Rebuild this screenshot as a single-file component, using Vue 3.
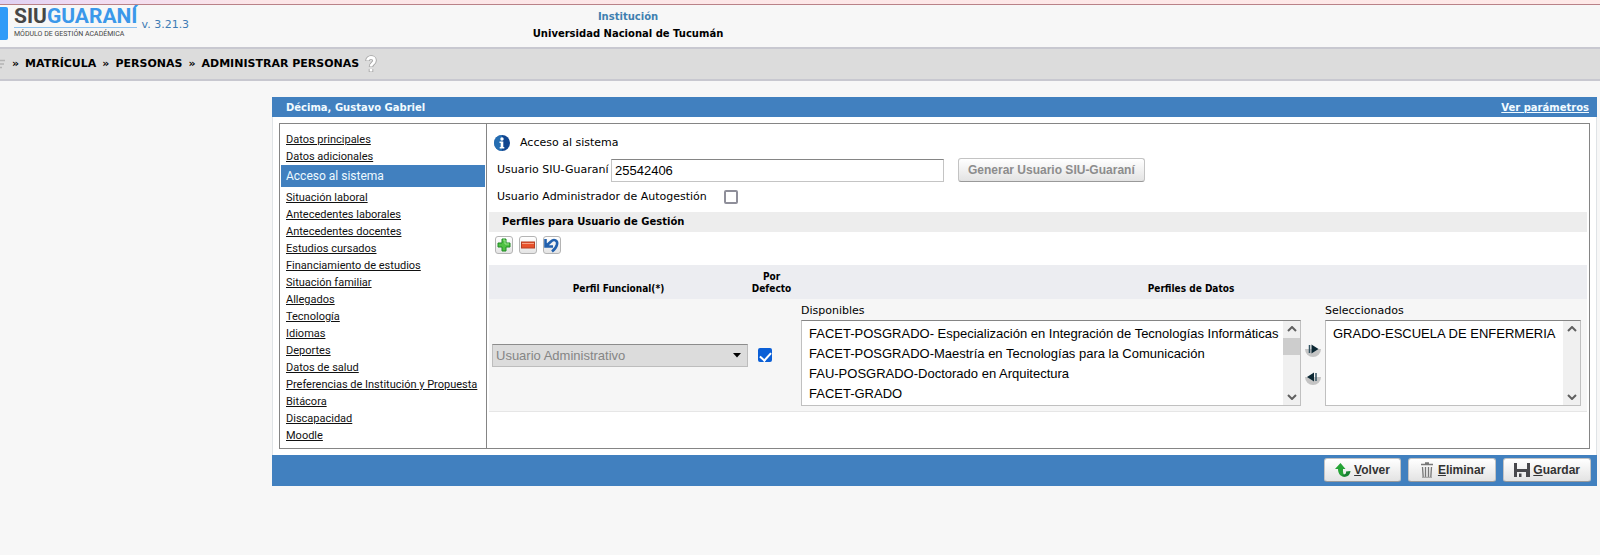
<script setup>
import { ref } from 'vue'

const crumbs = ['MATRÍCULA', 'PERSONAS', 'ADMINISTRAR PERSONAS']

const sections = [
  'Datos principales',
  'Datos adicionales',
  'Acceso al sistema',
  'Situación laboral',
  'Antecedentes laborales',
  'Antecedentes docentes',
  'Estudios cursados',
  'Financiamiento de estudios',
  'Situación familiar',
  'Allegados',
  'Tecnología',
  'Idiomas',
  'Deportes',
  'Datos de salud',
  'Preferencias de Institución y Propuesta',
  'Bitácora',
  'Discapacidad',
  'Moodle',
]
const active = 'Acceso al sistema'

const available = [
  'FACET-POSGRADO- Especialización en Integración de Tecnologías Informáticas',
  'FACET-POSGRADO-Maestría en Tecnologías para la Comunicación',
  'FAU-POSGRADO-Doctorado en Arquitectura',
  'FACET-GRADO',
]
const selected = ['GRADO-ESCUELA DE ENFERMERIA']

const username = ref('25542406')
const isAdmin = ref(false)
const isDefault = ref(true)
</script>

<template>
  <div class="page">
    <div class="strip"></div>
    <header class="top">
      <div class="brand">
        <span class="mark"></span>
        <div class="logo">
          <div class="name">SIU<span>GUARANÍ</span></div>
          <div class="module">MÓDULO DE GESTIÓN ACADÉMICA</div>
        </div>
        <span class="version">v. 3.21.3</span>
      </div>
      <div class="institution">
        <div class="inst-label">Institución</div>
        <div>Universidad Nacional de Tucumán</div>
      </div>
    </header>

    <nav class="crumbs">
      <svg width="6" height="12" viewBox="0 0 6 12"><path d="M0 2.5h5M0 6h4M0 9.500h2" stroke="#b4b4b4" stroke-width="1.500" /></svg>
      <template v-for="c in crumbs" :key="c">
        <span>»</span>
        <span>{{ c }}</span>
      </template>
      <svg width="12" height="18" viewBox="0 0 12 18">
        <path d="M2.500 6C2.500 1.500 9.500 1.500 9.500 5.500C9.500 8.500 6 8.500 6 12M6 14v3" fill="none" stroke="#a2a2a2" stroke-width="4.500" />
        <path d="M2.500 5.500C2.500 1.500 9.500 1.500 9.500 5.500C9.500 8.500 6 8.500 6 11.500M6 14v2.500" fill="none" stroke="#fff" stroke-width="2.800" />
      </svg>
    </nav>

    <main class="panel">
      <div class="bar">
        <span>Décima, Gustavo Gabriel</span>
        <a href="#">Ver parámetros</a>
      </div>

      <div class="frame">
        <div class="box">
          <ul class="menu">
            <li v-for="s in sections" :key="s" :class="{ active: s === active }">
              <a href="#">{{ s }}</a>
            </li>
          </ul>

          <section class="content">
            <div class="intro">
              <svg width="16" height="16" viewBox="0 0 16 16">
                <circle cx="8" cy="8" r="8" fill="#0f4590" />
                <path d="M8 0a8 8 0 0 0 0 16z" fill="#2e7fc0" opacity=".7" />
                <circle cx="8" cy="4" r="1.700" fill="#fff" />
                <path d="M5.500 6.500H9.300V12h1v1.500H5.700V12h1V8H5.500z" fill="#fff" />
              </svg>
              <span>Acceso al sistema</span>
            </div>

            <div class="row">
              <label class="user-label" for="user">Usuario SIU-Guaraní</label>
              <input id="user" v-model="username" class="text" type="text" />
              <button class="btn generate" type="button" disabled>Generar Usuario SIU-Guaraní</button>
            </div>

            <div class="row admin">
              <label for="admin">Usuario Administrador de Autogestión</label>
              <input id="admin" v-model="isAdmin" class="check" type="checkbox" />
            </div>

            <h2>Perfiles para Usuario de Gestión</h2>

            <div class="tools">
              <button type="button" aria-label="Agregar">
                <svg width="14" height="14" viewBox="0 0 14 14"><path d="M5 1h4v4h4v4H9v4H5V9H1V5h4z" fill="#4fc143" stroke="#218a25" /><path d="M6 2h2v4h4" fill="none" stroke="#9be58d" /></svg>
              </button>
              <button type="button" aria-label="Quitar">
                <svg width="14" height="14" viewBox="0 0 14 14"><rect x=".5" y="4" width="13" height="6" fill="#e8522c" stroke="#b53e22" /><path d="M1 5.500h12" stroke="#f7a184" /></svg>
              </button>
              <button type="button" aria-label="Deshacer">
                <svg width="16" height="16" viewBox="0 0 16 16"><path d="M1.500 2v7.500H9M2 9L7 4.500C10 1.500 14 3.500 13 7.500C12.500 10 10.500 12.500 8 14.500" fill="none" stroke="#2361ad" stroke-width="2.600" /></svg>
              </button>
            </div>

            <table>
              <thead>
                <tr>
                  <th class="c-profile">Perfil Funcional(*)</th>
                  <th class="c-default">Por<br />Defecto</th>
                  <th>Perfiles de Datos</th>
                </tr>
              </thead>
              <tbody>
                <tr>
                  <td>
                    <div class="combo">
                      <select disabled aria-label="Perfil Funcional">
                        <option>Usuario Administrativo</option>
                      </select>
                      <svg width="8" height="5" viewBox="0 0 8 5"><path d="M0 0h8L4 4.500z" fill="#000" /></svg>
                    </div>
                  </td>
                  <td class="def">
                    <input v-model="isDefault" class="check" type="checkbox" aria-label="Por Defecto" />
                  </td>
                  <td>
                    <div class="lists">
                      <div class="col wide">
                        <label for="avail">Disponibles</label>
                        <div class="list">
                          <select id="avail" multiple size="4">
                            <option v-for="p in available" :key="p">{{ p }}</option>
                          </select>
                          <div class="scroll">
                            <svg width="10" height="6" viewBox="0 0 10 6"><path d="M1 5l4-4 4 4" /></svg>
                            <i class="thumb"></i>
                            <svg class="down" width="10" height="6" viewBox="0 0 10 6"><path d="M1 1l4 4 4-4" /></svg>
                          </div>
                        </div>
                      </div>
                      <div class="arrows">
                        <button type="button" aria-label="Agregar seleccionados">
                          <svg width="16" height="16" viewBox="0 0 16 16"><path d="M0 8h16a8 8 0 0 1-16 0z" fill="#c4c4c4" /><path d="M4.500 4v8" stroke="#335260" stroke-width="1.500" /><path d="M6.500 3.500v9L13.500 8z" fill="#0b2733" /></svg>
                        </button>
                        <button type="button" aria-label="Quitar seleccionados">
                          <svg width="16" height="16" viewBox="0 0 16 16"><path d="M0 8h16a8 8 0 0 1-16 0z" fill="#c4c4c4" /><path d="M11 4v8" stroke="#335260" stroke-width="1.500" /><path d="M9 3.500v9L2 8z" fill="#0b2733" /></svg>
                        </button>
                      </div>
                      <div class="col narrow">
                        <label for="chosen">Seleccionados</label>
                        <div class="list">
                          <select id="chosen" multiple size="4">
                            <option v-for="p in selected" :key="p">{{ p }}</option>
                          </select>
                          <div class="scroll">
                            <svg width="10" height="6" viewBox="0 0 10 6"><path d="M1 5l4-4 4 4" /></svg>
                            <svg class="down" width="10" height="6" viewBox="0 0 10 6"><path d="M1 1l4 4 4-4" /></svg>
                          </div>
                        </div>
                      </div>
                    </div>
                  </td>
                </tr>
              </tbody>
            </table>
          </section>
        </div>
      </div>

      <footer>
        <button class="btn" type="button">
          <svg width="16" height="16" viewBox="0 0 16 16"><path d="M5.500 1L0 7h3c0 5 3 8 7.500 8C9 13.500 7.500 11 8 7h2.500z" fill="#25a336" /><path d="M7.500 14c4 2 7.500-.5 8-5l-4.500.5c.5 2-1 3.500-3.500 3z" fill="#178232" /></svg>
          <span><u>V</u>olver</span>
        </button>
        <button class="btn" type="button">
          <svg width="16" height="16" viewBox="0 0 16 16"><path d="M2 2.500h12M6 1h4" stroke="#777" stroke-width="1.500" /><path d="M3.500 5l.7 10M12.500 5l-.7 10M6.500 5v10M9.500 5v10" stroke="#777" stroke-width="1.300" /><path d="M3 15.300h10" stroke="#999" /></svg>
          <span><u>E</u>liminar</span>
        </button>
        <button class="btn" type="button">
          <svg width="16" height="16" viewBox="0 0 16 16"><path d="M0 1h3v6h10V1h3v14H0z" fill="#48484c" /><path d="M3 10h9v5H3z" fill="#eee" /><path d="M5 11.500h2.500V15H5z" fill="#48484c" /></svg>
          <span><u>G</u>uardar</span>
        </button>
      </footer>
    </main>
  </div>
</template>

<style>
body {
  background: #f7f7f7;
}
</style>

<style scoped>
.page {
  font: 11px/14px "DejaVu Sans", Verdana, sans-serif;
  color: #000;
}
.page * {
  box-sizing: border-box;
}
.strip {
  height: 5px;
  border-bottom: 1px solid #b98288;
  background: linear-gradient(90deg, #ddd0f3, #f0dcf3 5%, #fce6e8 16%, #fee9e8);
}
.top {
  display: grid;
  grid-template-columns: 200px 1fr 34%;
  height: 42px;
}
.brand {
  display: flex;
  align-items: flex-start;
}
.mark {
  flex: none;
  width: 8px;
  height: 33px;
  margin: 2px 6px 0 0;
  border-radius: 0 2px 2px 0;
  background: #2f9bf8;
}
.logo {
  white-space: nowrap;
}
.name {
  border-bottom: 1px solid #8fc3ef;
  font: bold 21px/22px Roboto, "Open Sans", sans-serif;
  color: #464646;
}
.name span {
  color: #3b98ea;
}
.module {
  font: 7px/12px Roboto, "Open Sans", sans-serif;
  color: #444;
}
.version {
  margin: 13px 0 0 4px;
  color: #3f7cb5;
  white-space: nowrap;
}
.institution {
  padding-top: 3px;
  text-align: center;
  font-size: 10px;
  font-weight: bold;
  line-height: 17px;
}
.inst-label {
  color: #3f80b0;
}
.crumbs {
  display: flex;
  align-items: center;
  gap: 6px;
  height: 34px;
  border: solid #c8c8d0;
  border-width: 2px 0;
  background: #dcdcdc;
  font-weight: bold;
}
.panel {
  margin: 16px 3px 0 17%;
}
.bar {
  display: flex;
  justify-content: space-between;
  padding: 4px 8px 2px 14px;
  background: #4180bf;
  color: #f2fbff;
  font-size: 10px;
  font-weight: bold;
}
.bar a {
  color: inherit;
}
.frame {
  padding: 6px;
  border: solid #dfe3e6;
  border-width: 0 1px;
  background: #fff;
}
.box {
  display: flex;
  border: 1px solid #858585;
}
.menu {
  flex: none;
  width: 207px;
  margin: 0;
  padding: 7px 1px 4px;
  border-right: 1px solid #858585;
  list-style: none;
  font: 11px/17px Roboto, Tahoma, sans-serif;
}
.menu li {
  padding-left: 5px;
  white-space: nowrap;
}
.menu a {
  color: #111;
}
.menu .active {
  margin-bottom: 2px;
  background: #4180bf;
  font-size: 12px;
  line-height: 22px;
}
.menu .active a {
  color: #eefaff;
  text-decoration: none;
}
.content {
  flex: 1;
  min-width: 0;
  padding: 11px 2px 0;
}
.intro {
  display: flex;
  align-items: center;
  gap: 10px;
  padding-left: 5px;
}
.row {
  display: flex;
  align-items: center;
  padding-left: 8px;
}
.intro + .row {
  margin-top: 7px;
}
.user-label {
  width: 114px;
  white-space: nowrap;
}
.text {
  width: 333px;
  height: 23px;
  margin-right: 14px;
  padding: 0 3px;
  border: 1px solid #c4c4c4;
  border-top-color: #858585;
  font: 13px "Liberation Sans", Arial, sans-serif;
}
.btn {
  display: flex;
  align-items: center;
  gap: 3px;
  height: 24px;
  padding: 0 10px;
  border: 1px solid #c3c3c3;
  border-bottom-color: #999;
  border-radius: 3px;
  background: linear-gradient(#fff, #e3e3e3);
  color: #333;
  font: bold 12px "Liberation Sans", Arial, sans-serif;
}
.generate {
  padding: 0 9px;
  color: #8c8c8c;
}
.check {
  display: block;
  width: 14px;
  height: 14px;
  margin: 0;
  border: 2px solid #8f8f9a;
  border-radius: 2px;
  appearance: none;
  background: #fff;
}
.check:checked {
  border-color: #0b5fd6;
  background: #0b5fd6;
}
.check:checked::after {
  content: "";
  display: block;
  width: 5px;
  height: 9px;
  margin: 0 auto;
  border: solid #fff;
  border-width: 0 2px 2px 0;
  transform: rotate(42deg);
}
.admin {
  gap: 17px;
  height: 30px;
}
h2 {
  margin: 0;
  padding: 3px 13px;
  background: #ededed;
  font-size: 10px;
  line-height: 14px;
}
.tools {
  display: flex;
  gap: 6px;
  padding: 4px 6px 11px;
}
.tools button {
  display: flex;
  align-items: center;
  justify-content: center;
  width: 18px;
  height: 18px;
  padding: 0;
  border: 1px solid #b4b4b4;
  border-radius: 3px;
  background: linear-gradient(#fff, #e4e4e4);
}
table {
  width: 100%;
  border-collapse: collapse;
  table-layout: fixed;
  font-size: 11px;
}
th {
  padding: 6px 0 4px;
  background: #ecedf1;
  font: bold 10px/12px "DejaVu Sans Condensed", Tahoma, sans-serif;
  vertical-align: bottom;
}
.c-profile {
  width: 259px;
}
.c-default {
  width: 47px;
}
td {
  padding: 0;
  border-bottom: 1px solid #e6e6e6;
  background: #f6f6f6;
  vertical-align: middle;
}
.combo {
  display: flex;
  align-items: center;
  padding-left: 3px;
}
.combo select {
  flex: 1;
  height: 23px;
  padding: 0 3px;
  border: 1px solid #bdbdbd;
  border-top-color: #8c8c8c;
  border-radius: 0;
  appearance: none;
  background: #dcdcdc;
  color: #858585;
  opacity: 1;
  font: 13px "Liberation Sans", Arial, sans-serif;
}
.combo svg {
  margin: 0 7px 0 -15px;
  z-index: 1;
}
.def {
  padding-left: 10px;
}
.lists {
  display: flex;
  padding: 5px 6px 5px 6px;
}
.col {
  display: flex;
  flex-direction: column;
  min-width: 0;
}
.col label {
  margin-bottom: 2px;
}
.wide {
  flex: 500 1 0;
}
.narrow {
  flex: 256 1 0;
}
.list {
  display: flex;
  height: 86px;
  border: 1px solid #c0c0c0;
  border-top-color: #858585;
  background: #fff;
}
.list select {
  flex: 1;
  min-width: 0;
  padding: 3px 0 1px;
  border: 0;
  outline: 0;
  overflow: hidden;
  background: #fff;
  color: #000;
  font: 13px "Liberation Sans", Arial, sans-serif;
}
.list option {
  min-height: 20px;
  padding: 2px 7px;
}
.scroll {
  display: flex;
  flex: none;
  flex-direction: column;
  align-items: center;
  width: 17px;
  padding: 5px 0;
  background: #f0f0f0;
}
.scroll path {
  fill: none;
  stroke: #606060;
  stroke-width: 2;
}
.thumb {
  width: 100%;
  height: 17px;
  margin-top: 6px;
  background: #cdcdcd;
}
.down {
  margin-top: auto;
}
.arrows {
  display: flex;
  flex-direction: column;
  justify-content: center;
  gap: 12px;
  padding: 16px 4px 0;
}
.arrows button {
  display: block;
  width: 16px;
  height: 16px;
  padding: 0;
  border: 0;
  background: none;
}
.arrows svg {
  display: block;
}
footer {
  display: flex;
  justify-content: flex-end;
  gap: 7px;
  padding: 3px 6px 4px;
  background: #4180bf;
}
</style>
